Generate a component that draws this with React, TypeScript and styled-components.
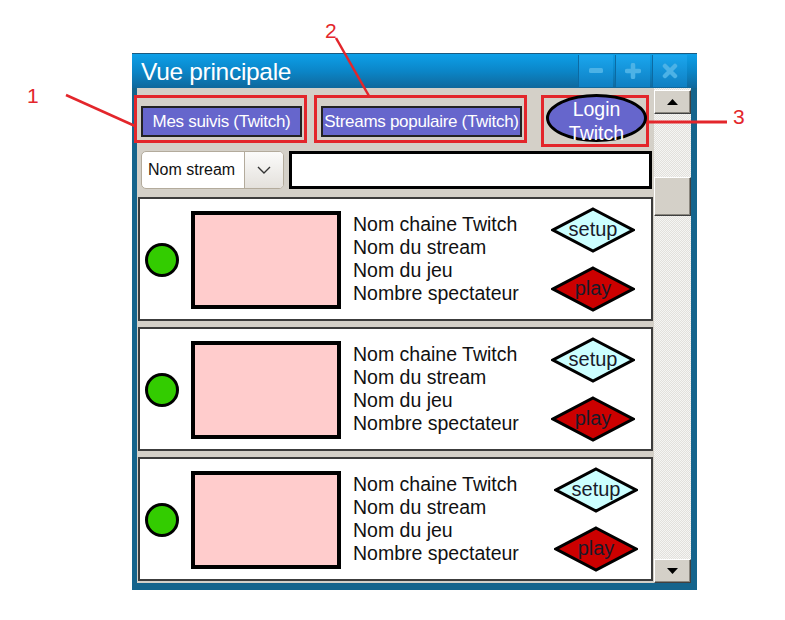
import React from 'react';
import styled, { createGlobalStyle } from 'styled-components';

const GlobalStyle = createGlobalStyle`
	html, body {
		margin: 0;
		padding: 0;
		background: #fff;
	}
	body {
		font-family: 'Liberation Sans', Arial, sans-serif;
	}
`;

const RED = '#e3262b';
const PANEL = '#d4d0c8';

const Page = styled.div`
	position: relative;
	width: 785px;
	height: 620px;
	padding: 53px 0 0 132px;
	box-sizing: border-box;
	background: #fff;
	overflow: hidden;
`;

const Window = styled.div`
	width: 565px;
	height: 537px;
	display: flex;
	flex-direction: column;
	background: #15648c;
	box-sizing: border-box;
`;

const TitleBar = styled.div`
	height: 35px;
	display: flex;
	align-items: flex-start;
	justify-content: space-between;
	background: linear-gradient(#0d9fe8, #0b86c8 50%, #10689c);
	border-top: 1px solid #1a5a80;
	box-sizing: border-box;
`;

const Title = styled.span`
	color: #fff;
	font-size: 24.5px;
	line-height: 36px;
	margin-left: 9px;
	letter-spacing: -0.3px;
`;

const TitleButtons = styled.div`
	display: flex;
	gap: 2px;
	margin: 1px 10px 0 0;
`;

const TitleButton = styled.div`
	width: 35px;
	height: 32px;
	display: flex;
	align-items: center;
	justify-content: center;
	background: linear-gradient(#1aa6ee, #0f7fc2);
	border-left: 1px solid #0c6aa2;
	box-sizing: border-box;
`;

const Body = styled.div`
	flex: 1;
	display: flex;
	margin: 0 6px 7px 5px;
	background: ${PANEL};
`;

const Main = styled.div`
	flex: 1;
	display: flex;
	flex-direction: column;
	min-width: 0;
`;

const HeaderRow = styled.div`
	display: flex;
	align-items: flex-start;
	margin: 7px 0 0 -3px;
`;

const Callout = styled.div<{ $w: number; $h: number; $ml?: number }>`
	width: ${p => p.$w}px;
	height: ${p => p.$h}px;
	margin-left: ${p => p.$ml || 0}px;
	border: 3px solid ${RED};
	box-sizing: border-box;
	display: flex;
	align-items: flex-end;
	padding: 0 2px 3px 4px;
`;

const NavButton = styled.div`
	flex: 1;
	height: 31px;
	background: #6666cc;
	border: 2px solid #222;
	box-sizing: border-box;
	color: #fff;
	font-size: 17px;
	letter-spacing: -0.3px;
	display: flex;
	align-items: center;
	justify-content: center;
	white-space: nowrap;
`;

const LoginOval = styled.div`
	width: 101px;
	height: 48px;
	margin: 0 -4px -1px -2px;
	border-radius: 50%;
	border: 3px solid #000;
	background: #6666cc;
	box-sizing: border-box;
	color: #fff;
	font-size: 19.5px;
	line-height: 24px;
	text-align: center;
	display: flex;
	flex-direction: column;
	justify-content: center;
	padding-top: 5px;
	overflow: visible;
`;

const SearchRow = styled.div`
	display: flex;
	gap: 5px;
	margin: 4px 2px 0 4px;
	height: 38px;
`;

const Select = styled.div`
	width: 143px;
	display: flex;
	border: 1px solid #b3ab9c;
	border-radius: 5px;
	background: #fff;
	box-sizing: border-box;
	overflow: hidden;
`;

const SelectValue = styled.span`
	flex: 1;
	font-size: 16px;
	color: #111;
	padding-left: 6px;
	display: flex;
	align-items: center;
`;

const SelectArrow = styled.div`
	width: 38px;
	border-left: 1px solid #b3ab9c;
	background: linear-gradient(#fbfbfa, #e4e1dc);
	display: flex;
	align-items: center;
	justify-content: center;
`;

const SearchInput = styled.div`
	flex: 1;
	background: #fff;
	border: 3px solid #000;
	box-sizing: border-box;
`;

const List = styled.div`
	display: flex;
	flex-direction: column;
	gap: 6px;
	margin: 8px 1px 0 1px;
`;

const Card = styled.div`
	height: 124px;
	background: #fff;
	border: 2px solid #3c3c3c;
	box-sizing: border-box;
	display: flex;
	align-items: center;
	padding: 0 16px 0 5px;
`;

const Status = styled.div`
	width: 34px;
	height: 34px;
	border-radius: 50%;
	background: #33cc00;
	border: 3px solid #000;
	box-sizing: border-box;
	flex-shrink: 0;
	margin-top: 1px;
`;

const Thumb = styled.div`
	width: 150px;
	height: 98px;
	margin-left: 12px;
	background: #ffcccc;
	border: 4px solid #000;
	box-sizing: border-box;
	flex-shrink: 0;
	margin-top: 2px;
`;

const Info = styled.div`
	flex: 1;
	margin-left: 12px;
	font-size: 19.5px;
	line-height: 23px;
	color: #111;
	white-space: nowrap;
`;

const Actions = styled.div<{ $shift: number }>`
	display: flex;
	flex-direction: column;
	gap: 13px;
	margin-right: ${p => -p.$shift}px;
	margin-top: 1px;
`;

const DiamondSvg = styled.svg`
	display: block;
`;

const ScrollBar = styled.div`
	width: 37px;
	display: flex;
	flex-direction: column;
	padding-top: 2px;
	background: repeating-conic-gradient(#e2e0dc 0 25%, #f5f5f3 0 50%) 0 0 / 2px 2px;
`;

const ScrollButton = styled.div`
	height: 24px;
	flex-shrink: 0;
	background: ${PANEL};
	border: 1px solid;
	border-color: #fff #404040 #404040 #fff;
	box-shadow: inset -1px -1px 0 #8a867e;
	box-sizing: border-box;
	display: flex;
	align-items: center;
	justify-content: center;
`;

const ScrollTrack = styled.div`
	flex: 1;
	display: flex;
	flex-direction: column;
`;

const ScrollThumb = styled.div`
	height: 39px;
	margin-top: 63px;
	background: ${PANEL};
	border: 1px solid;
	border-color: #fff #404040 #404040 #fff;
	box-shadow: inset -1px -1px 0 #8a867e;
	box-sizing: border-box;
`;

const Annotations = styled.svg`
	position: absolute;
	left: 0;
	top: 0;
	pointer-events: none;
`;

const Diamond = ({ label, fill }: { label: string; fill: string }) => (
	<DiamondSvg width="84" height="46" viewBox="0 0 84 46">
		<polygon points="42,2 82,23 42,44 2,23" fill={fill} stroke="#000" strokeWidth="3" strokeLinejoin="miter" />
		<text x="42" y="29" textAnchor="middle" fontSize="20" fontFamily="'Liberation Sans', Arial, sans-serif" fill="#1a1a2a">
			{label}
		</text>
	</DiamondSvg>
);

const Triangle = ({ down }: { down?: boolean }) => (
	<svg width="11" height="6" viewBox="0 0 11 6">
		<polygon points={down ? '0,0 11,0 5.5,6' : '0,6 11,6 5.5,0'} fill="#000" />
	</svg>
);

const streams = [{ shift: 0 }, { shift: 0 }, { shift: 3 }];

const StreamCard = ({ shift }: { shift: number }) => (
	<Card>
		<Status />
		<Thumb />
		<Info>
			<div>Nom chaine Twitch</div>
			<div>Nom du stream</div>
			<div>Nom du jeu</div>
			<div>Nombre spectateur</div>
		</Info>
		<Actions $shift={shift}>
			<Diamond label="setup" fill="#ccffff" />
			<Diamond label="play" fill="#cc0000" />
		</Actions>
	</Card>
);

export default function App() {
	return (
		<Page>
			<GlobalStyle />
			<Window>
				<TitleBar>
					<Title>Vue principale</Title>
					<TitleButtons>
						<TitleButton>
							<svg width="14" height="6" viewBox="0 0 14 6">
								<rect x="0" y="0" width="14" height="5" rx="1.5" fill="#4cb2e6" />
							</svg>
						</TitleButton>
						<TitleButton>
							<svg width="16" height="16" viewBox="0 0 16 16">
								<path d="M8 2v12M2 8h12" stroke="#4cb2e6" strokeWidth="4.5" strokeLinecap="round" />
							</svg>
						</TitleButton>
						<TitleButton>
							<svg width="16" height="16" viewBox="0 0 16 16">
								<path d="M3 3l10 10M13 3L3 13" stroke="#4cb2e6" strokeWidth="4.5" strokeLinecap="round" />
							</svg>
						</TitleButton>
					</TitleButtons>
				</TitleBar>
				<Body>
					<Main>
						<HeaderRow>
							<Callout $w={173} $h={48}>
								<NavButton>Mes suivis (Twitch)</NavButton>
							</Callout>
							<Callout $w={213} $h={48} $ml={7}>
								<NavButton>Streams populaire (Twitch)</NavButton>
							</Callout>
							<Callout $w={108} $h={52} $ml={14}>
								<LoginOval>
									<span>Login</span>
									<span>Twitch</span>
								</LoginOval>
							</Callout>
						</HeaderRow>
						<SearchRow>
							<Select>
								<SelectValue>Nom stream</SelectValue>
								<SelectArrow>
									<svg width="14" height="8" viewBox="0 0 14 8">
										<path d="M1 1l6 6 6-6" fill="none" stroke="#333" strokeWidth="1.4" />
									</svg>
								</SelectArrow>
							</Select>
							<SearchInput />
						</SearchRow>
						<List>
							{streams.map((s, i) => (
								<StreamCard key={i} shift={s.shift} />
							))}
						</List>
					</Main>
					<ScrollBar>
						<ScrollButton>
							<Triangle />
						</ScrollButton>
						<ScrollTrack>
							<ScrollThumb />
						</ScrollTrack>
						<ScrollButton>
							<Triangle down />
						</ScrollButton>
					</ScrollBar>
				</Body>
			</Window>
			<Annotations width="785" height="620" viewBox="0 0 785 620">
				<g stroke={RED} strokeWidth="2.5">
					<line x1="66" y1="95" x2="135" y2="126" />
					<line x1="336" y1="38" x2="369" y2="96" />
					<line x1="649" y1="122" x2="727" y2="122" strokeWidth="3" />
				</g>
				<g fill={RED} fontSize="21" fontFamily="'Liberation Sans', Arial, sans-serif">
					<text x="27" y="103">1</text>
					<text x="325" y="38">2</text>
					<text x="733" y="124">3</text>
				</g>
			</Annotations>
		</Page>
	);
}
